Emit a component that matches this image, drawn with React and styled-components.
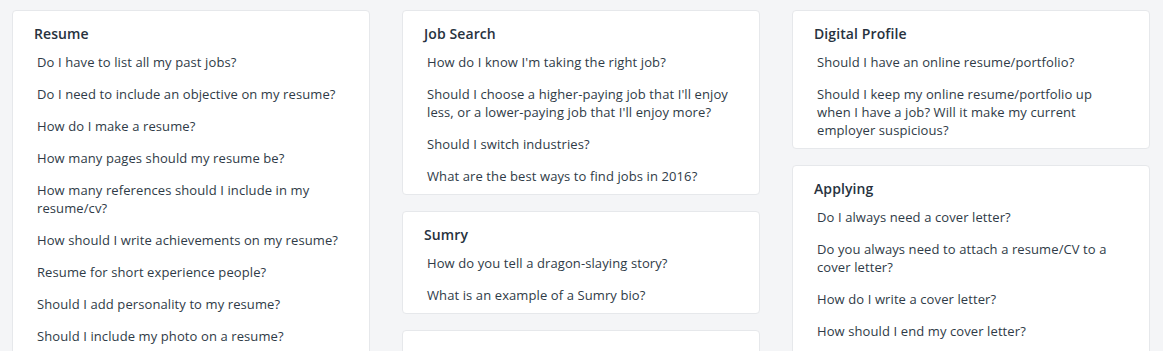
import React from 'react'
import styled, { createGlobalStyle } from 'styled-components'

const GlobalStyle = createGlobalStyle`
    html, body {
        margin: 0;
        padding: 0;
        background: #f4f5f7;
        font-family: "Open Sans", "Liberation Sans", sans-serif;
        overflow: hidden;
    }
`

const Page = styled.div`
    display: grid;
    grid-template-columns: repeat(3, 358px);
    column-gap: 32px;
    padding: 10px 13px 0 12px;
    align-items: start;
`

const Column = styled.div`
    display: flex;
    flex-direction: column;
    gap: 16px;
`

const Card = styled.div`
    background: #fff;
    border: 1px solid #e6e8eb;
    border-radius: 4px;
    padding: 14px 22px 2px 21px;
    min-height: ${(p) => p.$minHeight || 0}px;
    box-sizing: border-box;
`

const Title = styled.h3`
    margin: 0 0 3px;
    font-size: 14px;
    font-weight: 600;
    line-height: 18px;
    letter-spacing: 0.1px;
    color: #27323e;
`

const Question = styled.a`
    display: block;
    padding: 7px 3px;
    font-size: 13px;
    line-height: 18px;
    letter-spacing: 0.1px;
    color: #2f3b47;
    text-decoration: none;
    cursor: pointer;
`

const columns = [
    [
        {
            title: 'Resume',
            items: [
                'Do I have to list all my past jobs?',
                'Do I need to include an objective on my resume?',
                'How do I make a resume?',
                'How many pages should my resume be?',
                'How many references should I include in my resume/cv?',
                'How should I write achievements on my resume?',
                'Resume for short experience people?',
                'Should I add personality to my resume?',
                'Should I include my photo on a resume?',
            ],
        },
    ],
    [
        {
            title: 'Job Search',
            items: [
                "How do I know I'm taking the right job?",
                "Should I choose a higher-paying job that I'll enjoy less, or a lower-paying job that I'll enjoy more?",
                'Should I switch industries?',
                'What are the best ways to find jobs in 2016?',
            ],
        },
        {
            title: 'Sumry',
            items: [
                'How do you tell a dragon-slaying story?',
                'What is an example of a Sumry bio?',
            ],
        },
        { title: '', items: [], minHeight: 80 },
    ],
    [
        {
            title: 'Digital Profile',
            items: [
                'Should I have an online resume/portfolio?',
                'Should I keep my online resume/portfolio up when I have a job? Will it make my current employer suspicious?',
            ],
        },
        {
            title: 'Applying',
            minHeight: 200,
            items: [
                'Do I always need a cover letter?',
                'Do you always need to attach a resume/CV to a cover letter?',
                'How do I write a cover letter?',
                'How should I end my cover letter?',
            ],
        },
    ],
]

export default function App() {
    return (
        <>
            <GlobalStyle />
            <Page>
                {columns.map((col, i) => (
                    <Column key={i}>
                        {col.map((card, j) => (
                            <Card key={j} $minHeight={card.minHeight}>
                                {card.title && <Title>{card.title}</Title>}
                                {card.items.map((q) => (
                                    <Question key={q}>{q}</Question>
                                ))}
                            </Card>
                        ))}
                    </Column>
                ))}
            </Page>
        </>
    )
}
